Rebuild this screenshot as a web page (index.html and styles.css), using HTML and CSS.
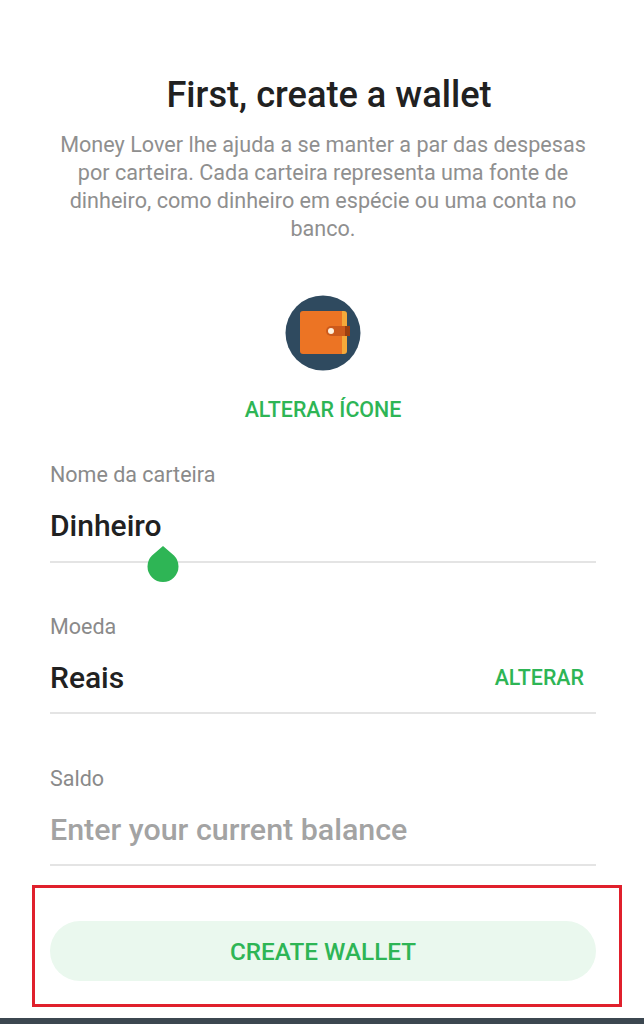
FILE: index.html
```html
<!DOCTYPE html>
<html lang="en">
<head>
  <meta charset="UTF-8" />
  <meta name="viewport" content="width=device-width, initial-scale=1.0"/>
  <title>First, create a wallet</title>
  <link rel="stylesheet" href="styles.css">
</head>
<body>
  <div class="screen">
    <h1 class="title">First, create a wallet</h1>
    <p class="intro">Money Lover lhe ajuda a se manter a par das despesas por carteira. Cada carteira representa uma fonte de dinheiro, como dinheiro em espécie ou uma conta no banco.</p>

    <div class="wallet-icon">
      <svg width="76" height="76" viewBox="0 0 76 76">
        <circle cx="38" cy="38" r="37.500" fill="#2f4a5f"/>
        <path d="M18 16 h41 a3 3 0 0 1 3 3 v37 a3 3 0 0 1 -3 3 h-41 z" fill="#f5a93a"/>
        <path d="M18 16 h39 v43 h-39 a3 3 0 0 1 -3 -3 v-37 a3 3 0 0 1 3 -3 z" fill="#ec7424"/>
        <path d="M46 31 h19 v10 h-19 a5 5 0 0 1 0 -10 z" fill="#cc5a1c"/>
        <rect x="60" y="31" width="5" height="10" fill="#9c3f10"/>
        <circle cx="46" cy="36" r="3" fill="#fdf1df"/>
      </svg>
    </div>
    <a class="change-icon" href="#">ALTERAR ÍCONE</a>

    <div class="field field-name">
      <label class="field-label">Nome da carteira</label>
      <div class="field-row"><span class="field-value">Dinheiro</span></div>
      <svg class="cursor-handle" width="32" height="36" viewBox="0 0 32 36">
        <path d="M16 0 L27 9.500 A15.500 15.500 0 1 1 5 9.500 Z" fill="#2eb555"/>
      </svg>
    </div>

    <div class="field field-currency">
      <label class="field-label">Moeda</label>
      <div class="field-row">
        <span class="field-value">Reais</span>
        <a class="change-link" href="#">ALTERAR</a>
      </div>
    </div>

    <div class="field field-balance">
      <label class="field-label">Saldo</label>
      <div class="field-row"><span class="field-value placeholder">Enter your current balance</span></div>
    </div>

    <div class="button-frame">
      <button class="create-btn">CREATE WALLET</button>
    </div>
  </div>
  <div class="bottom-bar"></div>
</body>
</html>
```

FILE: styles.css
```css
* {
  box-sizing: border-box;
  margin: 0;
  padding: 0;
  font-family: Roboto, 'Liberation Sans', sans-serif;
}

body {
  background-color: #ffffff;
  height: 1024px;
  overflow: hidden;
  color: #212121;
}

.screen {
  height: 1018px;
  padding: 72px 48px 0 50px;
  display: flex;
  flex-direction: column;
}

.title {
  padding-left: 12px;
  font-size: 36.200px;
  line-height: 46px;
  font-weight: 500;
  text-align: center;
}

.intro {
  margin-top: 13px;
  font-size: 21.600px;
  line-height: 28px;
  color: #8f8f8f;
  text-align: center;
}

.wallet-icon {
  margin-top: 52px;
  height: 76px;
  display: flex;
  justify-content: center;
}

.change-icon {
  margin-top: 26px;
  font-size: 21.400px;
  line-height: 26px;
  font-weight: 500;
  color: #2eb555;
  text-align: center;
  text-decoration: none;
}

.field {
  position: relative;
  border-bottom: 2px solid #e4e4e4;
  height: 100px;
}

.field-name {
  margin-top: 39px;
  height: 101px;
}

.field-currency {
  margin-top: 51px;
}

.field-balance {
  margin-top: 52px;
}

.field-label {
  display: block;
  font-size: 21.500px;
  line-height: 26px;
  color: #8a8a8a;
}

.field-row {
  margin-top: 18px;
  display: flex;
  justify-content: space-between;
  align-items: center;
  height: 38px;
  padding-right: 12px;
}

.field-value {
  font-size: 30px;
  font-weight: 500;
}

.placeholder {
  font-size: 30.400px;
  color: #a3a3a3;
}

.change-link {
  font-size: 21.400px;
  font-weight: 500;
  color: #2eb555;
  text-decoration: none;
}

.cursor-handle {
  position: absolute;
  left: 97px;
  top: 84px;
}

.button-frame {
  margin: 19px -26px 0 -18px;
  height: 122px;
  border: 3px solid #e0202c;
  padding: 33px 23px 0 15px;
}

.create-btn {
  display: block;
  width: 100%;
  height: 60px;
  border: none;
  border-radius: 30px;
  background-color: #eaf8ee;
  color: #2eb555;
  font-size: 24.300px;
  font-weight: 500;
}

.bottom-bar {
  height: 6px;
  background-color: #3c4750;
}
```
